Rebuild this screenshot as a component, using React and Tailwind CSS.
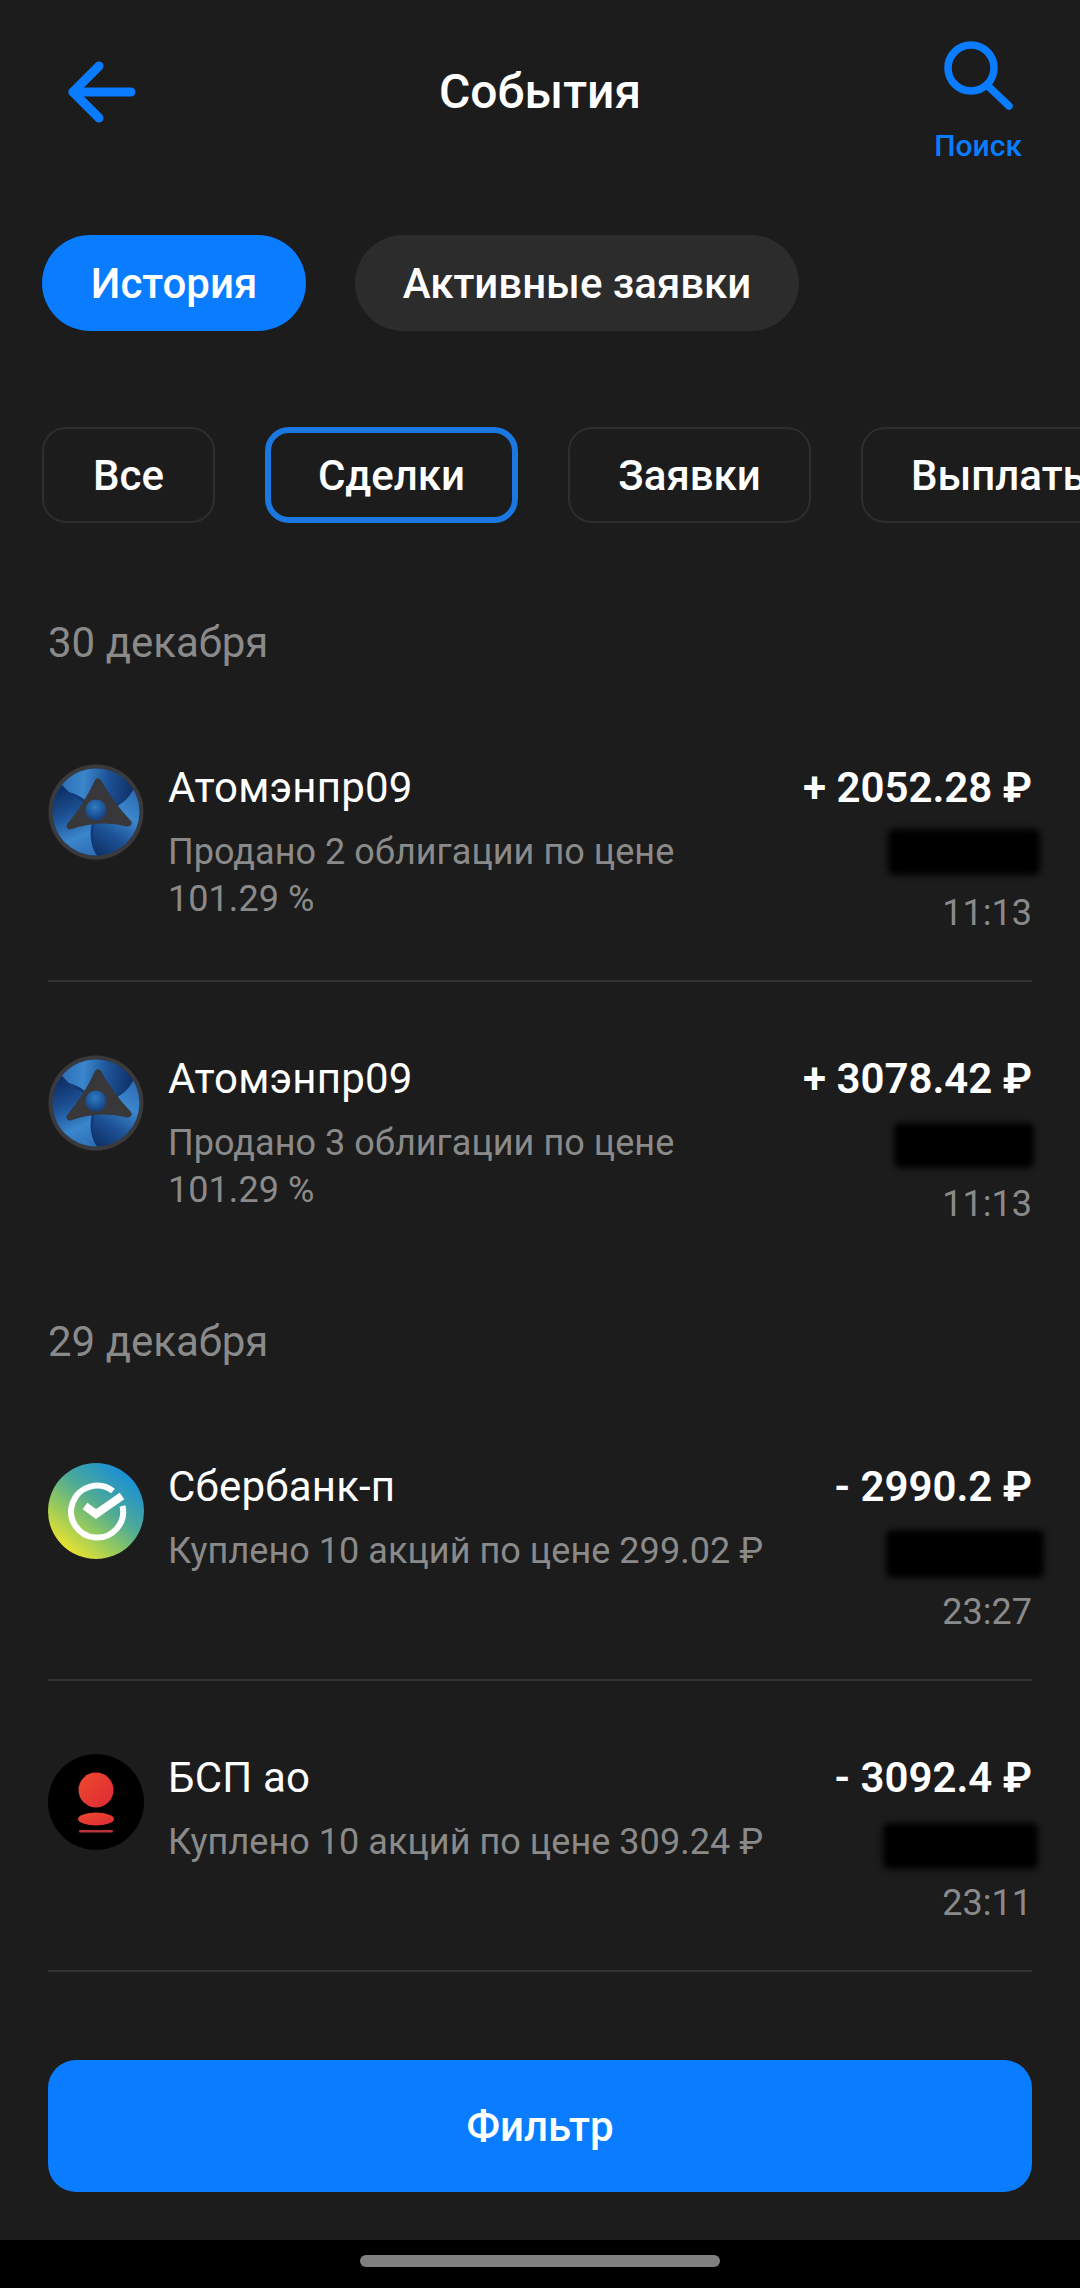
import React from 'react';

const FONT = { fontFamily: 'Roboto, "Noto Sans", sans-serif' };

function BackIcon() {
  return (
    <svg width="72" height="64" viewBox="0 0 72 64" fill="none" stroke="#0a7cff" strokeWidth="9" strokeLinecap="round" strokeLinejoin="round">
      <path d="M7 32H65" />
      <path d="M33 6L7 32L33 58" />
    </svg>
  );
}

function SearchIcon() {
  return (
    <svg width="72" height="72" viewBox="0 0 72 72" fill="none" stroke="#0a7cff" strokeWidth="7.5" strokeLinecap="round">
      <circle cx="29" cy="28" r="23" />
      <path d="M46 46L67 66" />
    </svg>
  );
}

function AtomLogo({ id }) {
  // one swirl blade, repeated at 120 degree steps
  const blade = 'M48 48C62 46 70 34 92 32L100 -10L-10 -10L-2 30C16 22 36 30 48 48Z';
  return (
    <svg width="96" height="96" viewBox="0 0 96 96">
      <defs>
        <linearGradient id={`${id}-a`} gradientUnits="userSpaceOnUse" x1="14" y1="20" x2="84" y2="26">
          <stop offset="0" stopColor="#2f6fb6" />
          <stop offset="0.3" stopColor="#3b86cc" />
          <stop offset="0.65" stopColor="#1d5296" />
          <stop offset="1" stopColor="#0f3168" />
        </linearGradient>
        <radialGradient id={`${id}-b`} cx="0.45" cy="0.35" r="0.7">
          <stop offset="0" stopColor="#2f7cc4" />
          <stop offset="1" stopColor="#123a78" />
        </radialGradient>
        <clipPath id={`${id}-c`}>
          <circle cx="48" cy="48" r="43.5" />
        </clipPath>
      </defs>
      <circle cx="48" cy="48" r="47.5" fill="#3a3a3c" />
      <g clipPath={`url(#${id}-c)`}>
        <circle cx="48" cy="48" r="44" fill="#123a78" />
        <path d={blade} fill={`url(#${id}-a)`} />
        <path d={blade} fill={`url(#${id}-a)`} transform="rotate(120 48 48)" />
        <path d={blade} fill={`url(#${id}-a)`} transform="rotate(240 48 48)" />
      </g>
      <path d="M50 18Q62 40 80 59Q51 52 22 62Q39 42 50 18Z" fill="#38383a" stroke="#38383a" strokeWidth="7" strokeLinejoin="round" />
      <circle cx="48" cy="46" r="10.5" fill={`url(#${id}-b)`} />
    </svg>
  );
}

function SberLogo() {
  return (
    <svg width="96" height="96" viewBox="0 0 96 96">
      <defs>
        <linearGradient id="sber-g" x1="0.15" y1="0.9" x2="0.78" y2="0.08">
          <stop offset="0" stopColor="#f0e42e" />
          <stop offset="0.32" stopColor="#93c95f" />
          <stop offset="0.6" stopColor="#4fab95" />
          <stop offset="1" stopColor="#1a8fd6" />
        </linearGradient>
      </defs>
      <circle cx="48" cy="48" r="48" fill="url(#sber-g)" />
      <path d="M65 28A26 26 0 1 0 74.5 43" fill="none" stroke="#fff" strokeWidth="6" />
      <path d="M37 43L48 51L74 33" fill="none" stroke="#fff" strokeWidth="8" strokeLinejoin="miter" />
    </svg>
  );
}

function BspLogo() {
  return (
    <svg width="96" height="96" viewBox="0 0 96 96">
      <defs>
        <linearGradient id="bsp-g" x1="0" y1="0" x2="1" y2="1">
          <stop offset="0" stopColor="#ee4a2f" />
          <stop offset="1" stopColor="#dd2a36" />
        </linearGradient>
      </defs>
      <circle cx="48" cy="48" r="48" fill="#000" />
      <circle cx="48" cy="36" r="17.5" fill="url(#bsp-g)" />
      <ellipse cx="48" cy="65" rx="18" ry="6.5" fill="url(#bsp-g)" />
      <rect x="31" y="76" width="34" height="2.5" rx="1" fill="#b8333c" />
    </svg>
  );
}

const ruble = '\u20BD';

function Row({ logo, name, lines, amount, time, blot, divider }) {
  return (
    <div className={`flex pt-[73px] pb-[43px] border-b-2 ${divider ? 'border-[#333333]' : 'border-transparent'}`}>
      <div className="w-[96px] shrink-0">{logo}</div>
      <div className="ml-[24px] flex-1 min-w-0">
        <div className="text-[42px] leading-[48px] text-white tracking-[0.2px]">{name}</div>
        <div className="mt-[17px] text-[36px] leading-[47px] text-[#8a8a8a] tracking-[0.05px]">
          {lines.map((l) => (
            <div key={l} className="whitespace-nowrap">{l}</div>
          ))}
        </div>
      </div>
      <div className="flex flex-col items-end w-[260px] h-[173px] shrink-0">
        <div className="text-[42px] leading-[48px] font-semibold text-white whitespace-nowrap">{amount}</div>
        <div className={`bg-black rounded-[6px] blur-[3px] ${blot}`} />
        <div className="text-[36px] leading-[48px] text-[#8a8a8a] mt-auto">{time}</div>
      </div>
    </div>
  );
}

export default function App() {
  return (
    <div className="w-[1080px] h-[2288px] bg-[#1c1c1c] overflow-hidden flex flex-col" style={FONT}>
      <div className="grid grid-cols-[1fr_auto_1fr] pt-[40px] px-[58px]">
        <div className="pt-[20px] pl-[8px]">
          <BackIcon />
        </div>
        <h1 className="text-[48px] leading-[56px] font-medium text-white mt-[24px]">События</h1>
        <div className="flex flex-col items-center justify-self-end">
          <SearchIcon />
          <span className="text-[30px] leading-[36px] font-medium text-[#0a7cff] mt-[16px]">Поиск</span>
        </div>
      </div>

      <div className="flex gap-[49px] pl-[42px] mt-[71px]">
        <button className="h-[96px] w-[264px] rounded-full bg-[#0a7cff] text-white text-[42px] font-medium">История</button>
        <button className="h-[96px] w-[444px] rounded-full bg-[#2c2c2c] text-white text-[42px] font-medium">Активные заявки</button>
      </div>

      <div className="flex gap-[50px] pl-[42px] mt-[96px] whitespace-nowrap">
        <button className="h-[96px] w-[173px] shrink-0 rounded-[24px] border-2 border-[#2e2e2e] text-white text-[42px] font-medium">Все</button>
        <button className="h-[96px] w-[253px] shrink-0 rounded-[24px] border-[6px] border-[#1a78e0] text-white text-[42px] font-medium">Сделки</button>
        <button className="h-[96px] w-[243px] shrink-0 rounded-[24px] border-2 border-[#2e2e2e] text-white text-[42px] font-medium">Заявки</button>
        <button className="h-[96px] w-[300px] shrink-0 rounded-[24px] border-2 border-[#2e2e2e] text-white text-[42px] font-medium text-left pl-[48px]">Выплаты</button>
      </div>

      <div className="flex-1 min-h-0 px-[48px] pt-[96px]">
        <div className="text-[42px] leading-[48px] text-[#8a8a8a] mb-[24px]">30 декабря</div>
        <Row
          logo={<AtomLogo id="atom1" />}
          name="Атомэнпр09"
          lines={['Продано 2 облигации по цене', '101.29 %']}
          amount={`+ 2052.28 ${ruble}`}
          time="11:13"
          blot="w-[152px] h-[46px] mt-[17px] -mr-[8px]"
          divider
        />
        <Row
          logo={<AtomLogo id="atom2" />}
          name="Атомэнпр09"
          lines={['Продано 3 облигации по цене', '101.29 %']}
          amount={`+ 3078.42 ${ruble}`}
          time="11:13"
          blot="w-[140px] h-[45px] mt-[20px] -mr-[2px]"
        />
        <div className="text-[42px] leading-[48px] text-[#8a8a8a] mt-[45px] mb-[24px]">29 декабря</div>
        <Row
          logo={<SberLogo />}
          name="Сбербанк-п"
          lines={['Куплено 10 акций по цене 299.02 ' + ruble]}
          amount={`- 2990.2 ${ruble}`}
          time="23:27"
          blot="w-[158px] h-[48px] mt-[19px] -mr-[12px]"
          divider
        />
        <Row
          logo={<BspLogo />}
          name="БСП ао"
          lines={['Куплено 10 акций по цене 309.24 ' + ruble]}
          amount={`- 3092.4 ${ruble}`}
          time="23:11"
          blot="w-[155px] h-[46px] mt-[21px] -mr-[6px]"
          divider
        />
      </div>

      <div className="px-[48px] pb-[48px]">
        <button className="w-full h-[132px] rounded-[28px] bg-[#0a7cff] text-white text-[42px] font-medium">Фильтр</button>
      </div>

      <div className="h-[48px] bg-black flex justify-center pt-[15px] shrink-0">
        <div className="w-[360px] h-[12px] rounded-full bg-[#808080]" />
      </div>
    </div>
  );
}
